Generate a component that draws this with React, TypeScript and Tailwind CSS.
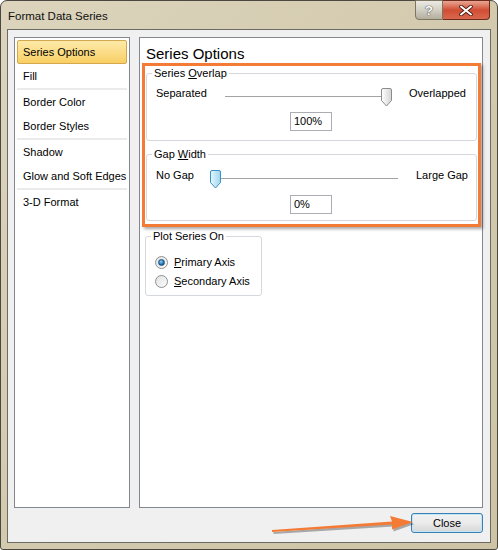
import type { ReactNode } from "react";

function Group({ legend, children, className = "" }: { legend: ReactNode; children: ReactNode; className?: string }) {
  return (
    <fieldset className={`rounded-[3px] border border-[#d5d8dc] ${className}`}>
      <legend className="ml-[5px] px-[2px] text-[11px] leading-[13px] text-black">{legend}</legend>
      {children}
    </fieldset>
  );
}

function Thumb({ blue }: { blue?: boolean }) {
  return (
    <svg width="11" height="19" viewBox="0 0 11 19" className="absolute top-0">
      <defs>
        <linearGradient id={blue ? "tb" : "tg"} x1="0" y1="0" x2="1" y2="0">
          <stop offset="0" stopColor={blue ? "#e6f6fd" : "#ffffff"} />
          <stop offset="1" stopColor={blue ? "#9fd6ef" : "#d4d4d4"} />
        </linearGradient>
      </defs>
      <path
        d="M2 0.5 H9 Q10.5 0.5 10.5 2 V12.5 L5.5 18 L0.5 12.5 V2 Q0.5 0.5 2 0.5 Z"
        fill={`url(#${blue ? "tb" : "tg"})`}
        stroke={blue ? "#3d8fc4" : "#8c8c8c"}
      />
    </svg>
  );
}

function Slider({ width, pos, blue }: { width: number; pos: number; blue?: boolean }) {
  return (
    <div className="relative mt-[4px] h-[19px]" style={{ width }}>
      <div className="absolute left-0 right-0 top-[8px] h-px bg-[#a3a3a3]" />
      <div className="absolute top-0" style={{ left: pos }}>
        <Thumb blue={blue} />
      </div>
    </div>
  );
}

function ValueBox({ value }: { value: string }) {
  return (
    <div className="ml-[143px] flex h-[19px] w-[42px] items-center border border-[#abadb3] bg-white pl-[3px] text-[11px]">
      {value}
    </div>
  );
}

function Radio({ checked, label }: { checked?: boolean; label: ReactNode }) {
  return (
    <div className="flex h-[18px] items-center">
      <div className="flex h-[13px] w-[13px] items-center justify-center rounded-full border border-[#8e8f8f] bg-gradient-to-br from-[#e3e3e3] to-[#fbfbfb]">
        {checked && (
          <div className="h-[7px] w-[7px] rounded-full border border-[#1c5180] bg-[radial-gradient(circle_at_40%_35%,#8fd3f5,#1f6fa8_60%,#0e3f66)]" />
        )}
      </div>
      <span className="ml-[6px] text-[11px] text-black">{label}</span>
    </div>
  );
}

const items: (string | null)[] = [
  "Series Options",
  "Fill",
  null,
  "Border Color",
  "Border Styles",
  null,
  "Shadow",
  "Glow and Soft Edges",
  null,
  "3-D Format",
];

export default function App() {
  return (
    <div className="relative h-[550px] w-[498px] overflow-hidden bg-white font-['Liberation_Sans',Arial,sans-serif] text-black">
      <div className="flex h-[550px] w-[498px] flex-col rounded-t-[7px] rounded-b-[3px] border border-[#4a4841] bg-gradient-to-br from-[#dcd4bc] via-[#d3caae] to-[#cec4a5] px-[6px] pb-[6px]">
        {/* Title bar */}
        <div className="flex h-[28px] shrink-0 items-start justify-between">
          <div className="pl-[1px] pt-[8px] text-[11.5px] leading-[14px] text-[#111]">Format Data Series</div>
          <div className="-mt-px mr-px flex">
            <div className="flex h-[20px] w-[28px] items-center justify-center rounded-bl-[4px] border border-[#7b7562] bg-gradient-to-b from-[#eceae2] via-[#d2cfc4] to-[#b4ae9c] text-[13px] font-bold leading-none text-white [text-shadow:0_0_1px_#333,0_0_1px_#333]">
              ?
            </div>
            <div className="flex h-[20px] w-[47px] items-center justify-center rounded-br-[4px] border border-l-0 border-[#6e2a1c] bg-gradient-to-b from-[#e9a593] via-[#cf4d33] to-[#d9684e]">
              <svg width="14" height="11" viewBox="0 0 14 11">
                <path d="M2 1.5 L12 9.5 M12 1.5 L2 9.5" stroke="#4a1a10" strokeWidth="3.6" strokeLinecap="round" />
                <path d="M2 1.5 L12 9.5 M12 1.5 L2 9.5" stroke="#ffffff" strokeWidth="2" strokeLinecap="round" />
              </svg>
            </div>
          </div>
        </div>

        {/* Client area */}
        <div className="flex flex-1 flex-col border border-[#6b6b66] bg-[#f0f0f0] px-[6px] pt-[7px]">
          <div className="flex h-[471px] gap-[9px]">
            {/* Category list */}
            <div className="w-[116px] border border-[#828790] bg-white p-px pt-[2px]">
              {items.map((it, i) =>
                it === null ? (
                  <div key={i} className="mx-px h-[2px] bg-[#ebebeb]" />
                ) : i === 0 ? (
                  <div
                    key={i}
                    className="mx-px flex h-[24px] items-center rounded-[2px] border border-[#d5a84e] bg-gradient-to-b from-[#fdeaa8] to-[#f9cf63] pl-[5px] text-[11px]"
                  >
                    {it}
                  </div>
                ) : (
                  <div key={i} className="mx-px flex h-[24px] items-center pl-[6px] text-[11px]">
                    {it}
                  </div>
                )
              )}
            </div>

            {/* Options panel */}
            <div className="w-[344px] border border-[#828790] bg-white pt-[7px]">
              <div className="pl-[6px] text-[15px] leading-[18px]">Series Options</div>

              <div className="ml-[2px] w-[339px] border-[3px] border-[#f47b36] px-[1px] pb-[3px] pt-[1px] shadow-[2px_2px_3px_rgba(0,0,0,0.35)]">
                <Group legend={<>Series <u>O</u>verlap</>} className="w-[331px] pb-[9px]">
                  <div className="flex items-start pl-[9px] pt-[4px]">
                    <div className="w-[69px] text-[11px] leading-[18px]">Separated</div>
                    <Slider width={165} pos={156} />
                    <div className="ml-[19px] text-[11px] leading-[18px]">Overlapped</div>
                  </div>
                  <div className="mt-[5px]">
                    <ValueBox value="100%" />
                  </div>
                </Group>

                <Group legend={<>Gap <u>W</u>idth</>} className="mt-[7px] w-[331px] pb-[6px]">
                  <div className="flex items-start pl-[9px] pt-[5px]">
                    <div className="w-[54px] text-[11px] leading-[18px]">No Gap</div>
                    <Slider width={188} pos={0} blue />
                    <div className="ml-[18px] text-[11px] leading-[18px]">Large Gap</div>
                  </div>
                  <div className="mt-[6px]">
                    <ValueBox value="0%" />
                  </div>
                </Group>
              </div>

              <Group legend="Plot Series On" className="ml-[5px] mt-[3px] w-[117px] pb-[5px]">
                <div className="flex flex-col gap-[1px] pl-[9px] pt-[10px]">
                  <Radio checked label={<><u>P</u>rimary Axis</>} />
                  <Radio label={<><u>S</u>econdary Axis</>} />
                </div>
              </Group>
            </div>
          </div>

          {/* Buttons */}
          <div className="mt-[5px] flex justify-end pr-px">
            <div className="flex h-[20px] w-[72px] items-center justify-center rounded-[3px] border border-[#3c7fb1] bg-gradient-to-b from-[#f2f2f2] via-[#ebebeb] to-[#d6d6d6] text-[11px] shadow-[inset_0_0_0_1px_#bfe6f9]">
              Close
            </div>
          </div>
        </div>
      </div>

      {/* Annotation arrow */}
      <svg className="pointer-events-none absolute left-0 top-0" width="498" height="550" viewBox="0 0 498 550">
        <g transform="translate(1.5,2)" opacity="0.3">
          <path d="M272 530 L392 521.5 L390 516 L413 522 L392 529.5 L392 524.5 L272 532 Z" fill="#000" />
        </g>
        <path d="M272 530 L392 521.5 L390 516 L413 522 L392 529.5 L392 524.5 L272 532 Z" fill="#f47b36" />
      </svg>
    </div>
  );
}
